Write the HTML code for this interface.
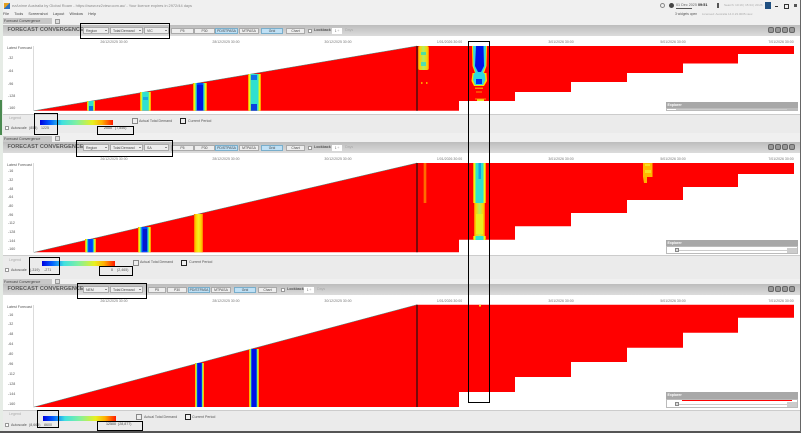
<!DOCTYPE html>
<html><head><meta charset="utf-8"><style>
html,body{margin:0;padding:0;background:#fff}
body{width:804px;height:435px;overflow:hidden;position:relative;font-family:"Liberation Sans",sans-serif;color:#666}
.a{position:absolute;white-space:nowrap;line-height:1}
.t{font-size:3.6px;color:#555;margin-top:.5px}
.d{font-size:3.5px;color:#777;transform:translateX(-50%);margin-top:.5px}
.bar{position:absolute;left:3px;width:797px;height:11px;background:linear-gradient(#bdbdbd,#dcdcdc)}
.title{position:absolute;left:7.5px;font-size:5.6px;font-weight:bold;color:#5a5a5a;line-height:1;margin-top:1.5px;white-space:nowrap}
.sel{position:absolute;height:7px;background:#eee;border:.5px solid #aaa;font-size:3.5px;line-height:6.5px;padding-left:2px;box-sizing:border-box;color:#444}
.sel:after{content:"";position:absolute;right:1.5px;top:2px;border:1.2px solid transparent;border-top:1.8px solid #222}
.btn{position:absolute;height:6px;margin-top:.5px;background:#eee;border:.5px solid #aaa;font-size:3.4px;line-height:5.2px;text-align:center;box-sizing:border-box;color:#444}
.on{background:#bfe0f5;border-color:#79aecb}
.leg{position:absolute;left:3px;width:797px;background:#ebebeb;border-top:1px solid #ccc}
.tab{position:absolute;left:3px;width:49px;height:6px;background:#c8c8c8;font-size:3.6px;line-height:6px;padding-left:1px;box-sizing:border-box;color:#444}
.box{position:absolute;border:1px solid #000;box-sizing:border-box}
.grad{position:absolute;width:73px;height:5px;background:linear-gradient(90deg,#0000e0,#0060ff 14%,#40e0e0 30%,#80f0a0 50%,#e8f020 72%,#ffb000 85%,#ff1800)}
.cb{position:absolute;width:4px;height:4px;background:#fff;border:.5px solid #999;box-sizing:border-box}
.sq{position:absolute;width:6px;height:6px;border:.5px solid #888;box-sizing:border-box;background:#eee}
.sq2{position:absolute;width:6px;height:6px;border:1px solid #222;box-sizing:border-box;background:#eee}
.ic{position:absolute;width:6px;height:6px;border-radius:2px;background:#999;border:.5px solid #666;box-sizing:border-box}
.exh{position:absolute;left:666px;width:132px;height:6.5px;background:#a8a8a8;color:#fff;font-size:3.5px;font-weight:bold;line-height:6.5px;padding-left:1.5px;box-sizing:border-box}
.exb{position:absolute;left:666px;width:132px;background:#fff;border:.5px solid #bbb;box-sizing:border-box}
</style></head><body>

<div style="position:absolute;left:0;top:0;width:800px;height:432px;background:#f0f0f0"></div>
<div style="position:absolute;left:0;top:0;width:3px;height:432px;background:#e6ece6"></div>
<div style="position:absolute;left:0;top:100px;width:1.5px;height:35px;background:#4a8a50"></div>

<!-- title bar -->
<div class="a" style="left:4px;top:3px;width:6px;height:6px;background:linear-gradient(135deg,#e0a020 50%,#2a70c0 50%)"></div>
<div class="a" style="left:12px;top:3.5px;font-size:3.9px;color:#888">ezAnime Australia by Global Roam - https://www.ez2view.com.au/ - Your licence expires in 2972/44 days</div>
<div class="a t" style="left:3px;top:12px;color:#444;font-size:3.8px;word-spacing:4.2px">File Tools Screenshot Layout Window Help</div>

<div class="a" style="left:660px;top:3px;width:5px;height:5px;border:.7px solid #888;border-radius:50%;box-sizing:border-box"></div>
<div class="a" style="left:669px;top:3px;width:5px;height:5px;background:#444;border-radius:50%"></div>
<div class="a" style="left:676px;top:3.5px;font-size:3.7px;color:#666">01 Dec 2025 <b style="color:#222">09:51</b></div>
<div class="a" style="left:676px;top:7.5px;width:16px;height:1px;background:#555"></div>
<div class="a" style="left:717px;top:3px;width:1.5px;height:5px;background:#555"></div>
<div class="a" style="left:724px;top:4px;font-size:3px;color:#aaa">Search: 10:19 | 15:34 | 20:26</div>
<div class="a" style="left:765px;top:2px;width:6px;height:7px;background:#1f4f80"></div>
<div class="a" style="left:775px;top:6px;width:3px;height:1px;background:#333"></div>
<div class="a" style="left:784px;top:4px;width:3px;height:3px;border:.7px solid #333"></div>
<div class="a" style="left:794px;top:4px;width:3px;height:3px;background:#555"></div>
<div class="a" style="left:675px;top:12.5px;font-size:3.3px;color:#555">3 widgets open</div>
<div class="a" style="left:702px;top:12.5px;font-size:3px;color:#aaa">Licensed: Australia 14.0.23.0005.view</div>

<!-- white chart bands -->
<div style="position:absolute;left:3px;top:36px;width:797px;height:78px;background:#fff"></div>
<div style="position:absolute;left:3px;top:152px;width:797px;height:103px;background:#fff"></div>
<div style="position:absolute;left:3px;top:295px;width:797px;height:115px;background:#fff"></div>

<!-- tabs -->
<div class="tab" style="top:18px">Forecast Convergence</div>
<div class="tab" style="top:135.5px">Forecast Convergence</div>
<div class="tab" style="top:278.5px">Forecast Convergence</div>
<div class="a" style="left:54.5px;top:18.5px;width:5px;height:5px;background:#ddd;border:.5px solid #999;box-sizing:border-box"></div>
<div class="a" style="left:54.5px;top:136px;width:5px;height:5px;background:#ddd;border:.5px solid #999;box-sizing:border-box"></div>
<div class="a" style="left:54.5px;top:279px;width:5px;height:5px;background:#ddd;border:.5px solid #999;box-sizing:border-box"></div>

<!-- toolbars -->
<div class="bar" style="top:25px"></div>
<div class="bar" style="top:141.5px"></div>
<div class="bar" style="top:284px"></div>

<div class="title" style="top:26.5px">FORECAST CONVERGENCE</div>
<div class="title" style="top:143px">FORECAST CONVERGENCE</div>
<div class="title" style="top:285.5px">FORECAST CONVERGENCE</div>

<div class="sel" style="left:83px;top:27px;width:26px">Region</div>
<div class="sel" style="left:110px;top:27px;width:33px">Total Demand</div>
<div class="sel" style="left:144px;top:27px;width:25px">VIC</div>
<div class="sel" style="left:83px;top:144px;width:26px">Region</div>
<div class="sel" style="left:110px;top:144px;width:33px">Total Demand</div>
<div class="sel" style="left:144px;top:144px;width:25px">SA</div>
<div class="sel" style="left:83px;top:286px;width:26px">NEM</div>
<div class="sel" style="left:110px;top:286px;width:33px">Total Demand</div>

<div class="btn" style="left:171px;top:27px;width:23px">P5</div>
<div class="btn" style="left:194px;top:27px;width:21px">P30</div>
<div class="btn on" style="left:215px;top:27px;width:23px">PD/STPASA</div>
<div class="btn" style="left:239px;top:27px;width:20px">MTPASA</div>
<div class="btn on" style="left:261px;top:27px;width:22px">Grid</div>
<div class="btn" style="left:286px;top:27px;width:19px">Chart</div>
<div class="cb" style="left:308px;top:28.5px"></div>
<div class="a t" style="left:314px;top:28.5px;font-weight:bold">Lookback</div>
<div class="a" style="left:332px;top:27.5px;width:10px;height:6px;background:#fff;font-size:3.2px;text-align:center;line-height:6px">1 ÷</div>
<div class="a t" style="left:345px;top:28.5px;color:#aaa">Days</div>

<div class="btn" style="left:171px;top:144px;width:23px">P5</div>
<div class="btn" style="left:194px;top:144px;width:21px">P30</div>
<div class="btn on" style="left:215px;top:144px;width:23px">PD/STPASA</div>
<div class="btn" style="left:239px;top:144px;width:20px">MTPASA</div>
<div class="btn on" style="left:261px;top:144px;width:22px">Grid</div>
<div class="btn" style="left:286px;top:144px;width:19px">Chart</div>
<div class="cb" style="left:308px;top:145.5px"></div>
<div class="a t" style="left:314px;top:145.5px;font-weight:bold">Lookback</div>
<div class="a" style="left:332px;top:144.5px;width:10px;height:6px;background:#fff;font-size:3.2px;text-align:center;line-height:6px">1 ÷</div>
<div class="a t" style="left:345px;top:145.5px;color:#aaa">Days</div>

<div class="btn" style="left:148px;top:286px;width:18px">P5</div>
<div class="btn" style="left:167px;top:286px;width:20px">P30</div>
<div class="btn on" style="left:188px;top:286px;width:22px">PD/STPASA</div>
<div class="btn" style="left:211px;top:286px;width:20px">MTPASA</div>
<div class="btn on" style="left:234px;top:286px;width:22px">Grid</div>
<div class="btn" style="left:258px;top:286px;width:19px">Chart</div>
<div class="cb" style="left:281px;top:287.5px"></div>
<div class="a t" style="left:287px;top:287.5px;font-weight:bold">Lookback</div>
<div class="a" style="left:304px;top:286.5px;width:10px;height:6px;background:#fff;font-size:3.2px;text-align:center;line-height:6px">1 ÷</div>
<div class="a t" style="left:317px;top:287.5px;color:#aaa">Days</div>

<!-- toolbar icons -->
<div class="ic" style="left:768px;top:27px"></div><div class="ic" style="left:775px;top:27px"></div><div class="ic" style="left:782px;top:27px"></div><div class="ic" style="left:789px;top:27px"></div>
<div class="ic" style="left:768px;top:143.5px"></div><div class="ic" style="left:775px;top:143.5px"></div><div class="ic" style="left:782px;top:143.5px"></div><div class="ic" style="left:789px;top:143.5px"></div>
<div class="ic" style="left:768px;top:285.5px"></div><div class="ic" style="left:775px;top:285.5px"></div><div class="ic" style="left:782px;top:285.5px"></div><div class="ic" style="left:789px;top:285.5px"></div>

<!-- date labels -->
<div class="a d" style="left:114px;top:40.5px">26/12/2025 30:00</div><div class="a d" style="left:226px;top:40.5px">28/12/2025 30:00</div><div class="a d" style="left:338px;top:40.5px">30/12/2025 30:00</div><div class="a d" style="left:449.5px;top:40.5px">1/01/2026 30:00</div><div class="a d" style="left:561px;top:40.5px">3/01/2026 30:00</div><div class="a d" style="left:673px;top:40.5px">5/01/2026 30:00</div><div class="a d" style="left:781px;top:40.5px">7/01/2026 30:00</div>
<div class="a d" style="left:114px;top:157px">26/12/2025 30:00</div><div class="a d" style="left:226px;top:157px">28/12/2025 30:00</div><div class="a d" style="left:338px;top:157px">30/12/2025 30:00</div><div class="a d" style="left:449.5px;top:157px">1/01/2026 30:00</div><div class="a d" style="left:561px;top:157px">3/01/2026 30:00</div><div class="a d" style="left:673px;top:157px">5/01/2026 30:00</div><div class="a d" style="left:781px;top:157px">7/01/2026 30:00</div>
<div class="a d" style="left:114px;top:299px">26/12/2025 30:00</div><div class="a d" style="left:226px;top:299px">28/12/2025 30:00</div><div class="a d" style="left:338px;top:299px">30/12/2025 30:00</div><div class="a d" style="left:449.5px;top:299px">1/01/2026 30:00</div><div class="a d" style="left:561px;top:299px">3/01/2026 30:00</div><div class="a d" style="left:673px;top:299px">5/01/2026 30:00</div><div class="a d" style="left:781px;top:299px">7/01/2026 30:00</div>

<!-- y axes -->
<div class="a t" style="left:7px;top:46.5px">Latest Forecast</div>
<div class="a t" style="left:8px;top:56px">-32</div><div class="a t" style="left:8px;top:69px">-64</div><div class="a t" style="left:8px;top:82px">-96</div><div class="a t" style="left:8px;top:94px">-128</div><div class="a t" style="left:8px;top:106px">-160</div>
<div class="a t" style="left:7px;top:163px">Latest Forecast</div>
<div class="a t" style="left:8px;top:169.5px">-16</div><div class="a t" style="left:8px;top:178px">-32</div><div class="a t" style="left:8px;top:187px">-48</div><div class="a t" style="left:8px;top:195.5px">-64</div><div class="a t" style="left:8px;top:204px">-80</div><div class="a t" style="left:8px;top:213px">-96</div><div class="a t" style="left:8px;top:221.5px">-112</div><div class="a t" style="left:8px;top:230px">-128</div><div class="a t" style="left:8px;top:239px">-144</div><div class="a t" style="left:8px;top:247.5px">-160</div>
<div class="a t" style="left:7px;top:305.5px">Latest Forecast</div>
<div class="a t" style="left:8px;top:313px">-16</div><div class="a t" style="left:8px;top:322.5px">-32</div><div class="a t" style="left:8px;top:332.5px">-48</div><div class="a t" style="left:8px;top:342px">-64</div><div class="a t" style="left:8px;top:352px">-80</div><div class="a t" style="left:8px;top:362px">-96</div><div class="a t" style="left:8px;top:372px">-112</div><div class="a t" style="left:8px;top:382px">-128</div><div class="a t" style="left:8px;top:392px">-144</div><div class="a t" style="left:8px;top:402px">-160</div>

<!-- legends -->
<div class="leg" style="top:114px;height:18px"></div>
<div class="leg" style="top:255px;height:23px"></div>
<div class="leg" style="top:410px;height:22px"></div>

<svg width="804" height="435" viewBox="0 0 804 435" style="position:absolute;left:0;top:0">
<defs>
<linearGradient id="b"><stop offset="0" stop-color="#ff7000"/><stop offset=".1" stop-color="#ff0"/><stop offset=".22" stop-color="#2de0c0"/><stop offset=".32" stop-color="#0040ff"/><stop offset=".68" stop-color="#0040ff"/><stop offset=".78" stop-color="#2de0c0"/><stop offset=".9" stop-color="#ff0"/><stop offset="1" stop-color="#ff7000"/></linearGradient>
<linearGradient id="B"><stop offset="0" stop-color="#ff7000"/><stop offset=".1" stop-color="#ff0"/><stop offset=".2" stop-color="#2de0c0"/><stop offset=".28" stop-color="#0010e8"/><stop offset=".72" stop-color="#0010e8"/><stop offset=".8" stop-color="#2de0c0"/><stop offset=".9" stop-color="#ff0"/><stop offset="1" stop-color="#ff7000"/></linearGradient>
<linearGradient id="c"><stop offset="0" stop-color="#ff7000"/><stop offset=".1" stop-color="#ff0"/><stop offset=".25" stop-color="#30e0d0"/><stop offset=".75" stop-color="#30e0d0"/><stop offset=".9" stop-color="#ff0"/><stop offset="1" stop-color="#ff7000"/></linearGradient>
<linearGradient id="y"><stop offset="0" stop-color="#ff7000"/><stop offset=".2" stop-color="#ffd000"/><stop offset=".5" stop-color="#f4f020"/><stop offset=".8" stop-color="#ffd000"/><stop offset="1" stop-color="#ff7000"/></linearGradient>
<linearGradient id="g"><stop offset="0" stop-color="#ff7000"/><stop offset=".15" stop-color="#ffd000"/><stop offset=".5" stop-color="#b0f060"/><stop offset=".85" stop-color="#ffd000"/><stop offset="1" stop-color="#ff7000"/></linearGradient>
<linearGradient id="o"><stop offset="0" stop-color="#f00"/><stop offset=".5" stop-color="#ff9000"/><stop offset="1" stop-color="#f00"/></linearGradient>
</defs>

<!-- axes -->
<path d="M33.5 46V111M33.5 163V252.5M33.5 305V407.5" stroke="#ccc" stroke-width=".7" fill="none"/>

<!-- Panel 1 -->
<path d="M34 110.7L417 46H794V54H738V63.5H683V73H627V82H571V92H515V101H459V110.7Z" fill="#f00"/>
<path d="M34 110.7L417 46" stroke="#4a8a80" stroke-width=".5" fill="none"/>
<rect x="87" y="101" width="8" height="9.7" fill="url(#c)"/>
<rect x="89" y="106" width="4" height="4.7" fill="#0a70e0"/>
<rect x="140" y="92" width="11" height="18.7" fill="url(#c)"/>
<rect x="143" y="97" width="5" height="3" fill="#18a8e0"/>
<rect x="193" y="83" width="14" height="27.7" fill="url(#b)"/>
<rect x="197" y="85" width="6" height="25" fill="#0018e0"/>
<rect x="248" y="74" width="13" height="36.7" fill="url(#c)"/>
<rect x="251" y="75" width="6" height="5" fill="#1070e8"/>
<rect x="251" y="104" width="6" height="6.7" fill="#0a40e0"/>
<rect x="418" y="46" width="11" height="24" rx="2" fill="url(#g)"/>
<rect x="421" y="52" width="5" height="3" fill="#50e0a0"/>
<rect x="421" y="62" width="5" height="4" fill="#50e0b0"/>
<rect x="421" y="82" width="1.5" height="2" fill="#ffa000"/>
<rect x="426" y="82" width="1.5" height="2" fill="#ffa000"/>
<!-- central hot spot -->
<path d="M472 46H487L486.5 66L484 73H486.5L487 81L484 86H474L471.5 81L472.5 73H475L472.5 66Z" fill="#ffe000"/>
<path d="M473 46H486L485.5 66L483 72L485 74.5L485.5 80L483 85H475L473 80L473.5 74.5L475.5 72L473.5 66Z" fill="#30d8e0"/>
<path d="M476 46H483.5L484 66L481 72H478L475 66Z" fill="#0010e8"/>
<rect x="476" y="79" width="6" height="5" fill="#0030f0"/>
<rect x="475" y="87.5" width="8" height="1.5" fill="#ff9000"/>
<rect x="476" y="91.5" width="6" height="1" fill="#ff9000"/>
<rect x="477" y="99.5" width="7" height="1.5" fill="#e8e820"/>
<rect x="475" y="98.5" width="11" height="1" fill="#ff9000"/>

<!-- Panel 2 -->
<path d="M34 252.3L417 163H794V174H738V187H683V200H627V213H571V226.3H515V239.7H459V252.3Z" fill="#f00"/>
<path d="M34 252.3L417 163" stroke="#4a8a80" stroke-width=".5" fill="none"/>
<rect x="85" y="239" width="11" height="13.3" fill="url(#b)"/>
<rect x="138" y="227" width="13" height="25.3" fill="url(#b)"/>
<rect x="143" y="229" width="4" height="22" fill="#0018d0"/>
<rect x="194" y="214" width="9" height="38.3" fill="url(#y)"/>
<rect x="423" y="163" width="4" height="40" fill="url(#o)"/>
<rect x="473" y="163" width="13" height="40" fill="url(#c)"/>
<rect x="478.5" y="163" width="2.5" height="16" fill="#10a0e8"/>
<rect x="474" y="203" width="11" height="33" fill="url(#g)"/>
<rect x="476" y="214" width="7" height="20" fill="#e8f020"/>
<rect x="473" y="236" width="13" height="4" fill="url(#c)"/>
<rect x="643" y="163" width="9.5" height="14" fill="#ffb800"/>
<rect x="645" y="164" width="5" height="2" fill="#f4e020"/>
<rect x="645" y="170" width="6" height="3" fill="#f4e020"/>
<path d="M643 177H647V183H644Z" fill="#ffb000"/>

<!-- Panel 3 -->
<path d="M34 407L417 304.7H794V317.7H738V332.7H683V347.7H627V362H571V377H515V392H459V407Z" fill="#f00"/>
<path d="M34 407L417 304.7" stroke="#4a8a80" stroke-width=".5" fill="none"/>
<path d="M195 363H204V407H195Z" fill="url(#B)"/>
<path d="M249 349H259V407H249Z" fill="url(#B)"/>
<rect x="252" y="352" width="4" height="55" fill="#0010e8"/>
<rect x="479" y="305" width="2" height="1.5" fill="#e8e820"/>

<!-- dark vertical lines -->
<path d="M417 46V110.7M417 163V252.3M417 304.7V407" stroke="#301010" stroke-width="1.3" fill="none"/>
</svg>

<!-- explorers -->
<div class="exh" style="top:101.7px">Explorer</div>
<div class="exb" style="top:108.2px;height:3.3px"></div>
<div class="a" style="left:676px;top:109px;width:116px;height:.7px;background:#ccc"></div>
<div class="a" style="left:787px;top:108px;width:10px;height:3px;background:#bbb"></div>
<div class="exh" style="top:239.7px">Explorer</div>
<div class="exb" style="top:246.2px;height:7.8px"></div>
<div class="a" style="left:676px;top:249.5px;width:116px;height:1px;background:#ccc"></div>
<div class="a" style="left:675px;top:248px;width:3.5px;height:4px;background:#ddd;border:.5px solid #888;box-sizing:border-box"></div>
<div class="a" style="left:787px;top:247.5px;width:10px;height:5px;background:#ccc"></div>
<div class="exh" style="top:392px">Explorer</div>
<div class="exb" style="top:398.5px;height:9.5px"></div>
<div class="a" style="left:682px;top:399.5px;width:110px;height:1.3px;background:#f00"></div>
<div class="a" style="left:676px;top:403.5px;width:116px;height:1px;background:#ccc"></div>
<div class="a" style="left:675px;top:402px;width:3.5px;height:4px;background:#ddd;border:.5px solid #888;box-sizing:border-box"></div>
<div class="a" style="left:787px;top:402px;width:10px;height:5px;background:#ccc"></div>

<!-- legend contents -->
<div class="grad" style="left:40px;top:119.5px"></div>
<div class="grad" style="left:42px;top:261px"></div>
<div class="grad" style="left:43px;top:415.7px"></div>

<div class="a t" style="left:9px;top:116px;color:#aaa">Legend</div>
<div class="cb" style="left:5px;top:125.5px"></div>
<div class="a t" style="left:11px;top:126px">Autoscale</div>
<div class="a t" style="left:29px;top:126px">(858)</div>
<div class="a t" style="left:41px;top:126.5px">1225</div>
<div class="a t" style="left:104px;top:126.5px;color:#333">2000</div>
<div class="a t" style="left:115px;top:126.5px">(7,856)</div>
<div class="sq" style="left:132px;top:117.5px"></div>
<div class="a t" style="left:139px;top:119px">Actual Total Demand</div>
<div class="sq2" style="left:179.5px;top:117.5px"></div>
<div class="a t" style="left:188px;top:119px">Current Period</div>

<div class="a t" style="left:9px;top:258px;color:#aaa">Legend</div>
<div class="cb" style="left:5px;top:267.5px"></div>
<div class="a t" style="left:11px;top:268px">Autoscale</div>
<div class="a t" style="left:30px;top:268px">(-319)</div>
<div class="a t" style="left:44px;top:268px">-271</div>
<div class="a t" style="left:111px;top:268px;color:#333">0</div>
<div class="a t" style="left:117px;top:268px">(2,465)</div>
<div class="sq" style="left:133px;top:259.5px"></div>
<div class="a t" style="left:140px;top:260.5px">Actual Total Demand</div>
<div class="sq2" style="left:181px;top:259.5px"></div>
<div class="a t" style="left:189px;top:260.5px">Current Period</div>

<div class="a t" style="left:9px;top:412.5px;color:#aaa">Legend</div>
<div class="cb" style="left:5px;top:422.5px"></div>
<div class="a t" style="left:11px;top:423px">Autoscale</div>
<div class="a t" style="left:29px;top:423px">(8,665)</div>
<div class="a t" style="left:44px;top:423px">8600</div>
<div class="a t" style="left:106px;top:422.5px;color:#333">12500</div>
<div class="a t" style="left:118px;top:422.5px">(28,877)</div>
<div class="sq" style="left:136px;top:414px"></div>
<div class="a t" style="left:144px;top:415.5px">Actual Total Demand</div>
<div class="sq2" style="left:184.5px;top:414px"></div>
<div class="a t" style="left:192px;top:415.5px">Current Period</div>

<!-- annotation boxes -->
<div class="box" style="left:80px;top:23px;width:90px;height:16px"></div>
<div class="box" style="left:33.5px;top:113px;width:24.5px;height:22px"></div>
<div class="box" style="left:97px;top:126px;width:37px;height:9px"></div>
<div class="box" style="left:76px;top:140px;width:97px;height:17px"></div>
<div class="box" style="left:29px;top:256.5px;width:31px;height:18.5px"></div>
<div class="box" style="left:99px;top:266px;width:34px;height:9.5px"></div>
<div class="box" style="left:77px;top:283px;width:70px;height:16px"></div>
<div class="box" style="left:37px;top:410px;width:22px;height:18px"></div>
<div class="box" style="left:97px;top:421px;width:46px;height:10px"></div>
<div class="box" style="left:468px;top:41px;width:21.5px;height:362px;border-width:1.5px"></div>

<!-- window frame -->
<div style="position:absolute;left:0;top:431px;width:801px;height:1.5px;background:#555"></div>
<div style="position:absolute;left:800px;top:0;width:1.2px;height:432px;background:#666"></div>
</body></html>
